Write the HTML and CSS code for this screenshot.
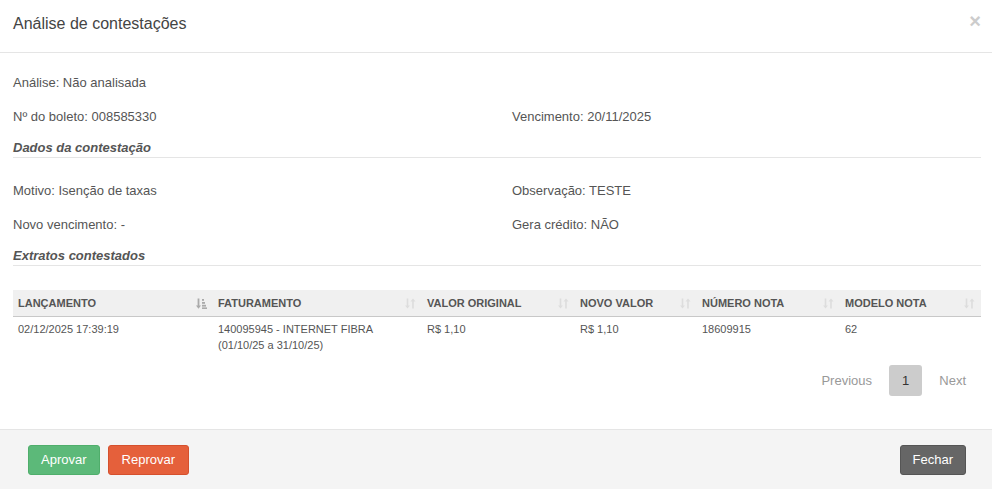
FILE: index.html
```html
<!DOCTYPE html>
<html lang="pt-BR">
<head>
<meta charset="utf-8">
<title>Análise de contestações</title>
<link rel="stylesheet" href="styles.css">
</head>
<body>
<div class="modal">
  <div class="modal-header">
    <h4 class="modal-title">Análise de contestações</h4>
    <span class="close">&times;</span>
  </div>
  <div class="modal-body">
    <div class="fields">
      <div class="row"><div class="col">Análise: Não analisada</div></div>
      <div class="row"><div class="col">Nº do boleto: 008585330</div><div class="col">Vencimento: 20/11/2025</div></div>
    </div>
    <h5 class="section">Dados da contestação</h5>
    <div class="fields">
      <div class="row"><div class="col">Motivo: Isenção de taxas</div><div class="col">Observação: TESTE</div></div>
      <div class="row"><div class="col">Novo vencimento: -</div><div class="col">Gera crédito: NÃO</div></div>
    </div>
    <h5 class="section">Extratos contestados</h5>
    <table class="grid">
      <colgroup>
        <col class="c1"><col class="c2"><col class="c3"><col class="c4"><col class="c5"><col class="c6">
      </colgroup>
      <thead>
        <tr>
          <th><div class="th-in"><span>LANÇAMENTO</span>
            <svg class="sort active" width="11" height="11" viewBox="0 0 11 11"><path d="M2.5 0.5v8.5" stroke="currentColor" stroke-width="1.8"/><path d="M0 7.5l2.5 3.2l2.5-3.2z" fill="currentColor"/><rect x="6" y="1" width="2" height="1.8" fill="currentColor"/><rect x="6" y="4" width="3" height="1.8" fill="currentColor"/><rect x="6" y="6.8" width="4" height="1.8" fill="currentColor"/><rect x="6" y="9.4" width="5" height="1.6" fill="currentColor"/></svg></div></th>
          <th><div class="th-in"><span>FATURAMENTO</span>
            <svg class="sort" width="11" height="11" viewBox="0 0 11 11"><path d="M2.5 0.5v8.5" stroke="currentColor" stroke-width="1.6"/><path d="M0 7.5l2.5 3l2.5-3z" fill="currentColor"/><path d="M8 2v8.5" stroke="currentColor" stroke-width="1.6"/><path d="M5.5 3.5l2.5-3l2.5 3z" fill="currentColor"/></svg></div></th>
          <th><div class="th-in"><span>VALOR ORIGINAL</span>
            <svg class="sort" width="11" height="11" viewBox="0 0 11 11"><path d="M2.5 0.5v8.5" stroke="currentColor" stroke-width="1.6"/><path d="M0 7.5l2.5 3l2.5-3z" fill="currentColor"/><path d="M8 2v8.5" stroke="currentColor" stroke-width="1.6"/><path d="M5.5 3.5l2.5-3l2.5 3z" fill="currentColor"/></svg></div></th>
          <th><div class="th-in"><span>NOVO VALOR</span>
            <svg class="sort" width="11" height="11" viewBox="0 0 11 11"><path d="M2.5 0.5v8.5" stroke="currentColor" stroke-width="1.6"/><path d="M0 7.5l2.5 3l2.5-3z" fill="currentColor"/><path d="M8 2v8.5" stroke="currentColor" stroke-width="1.6"/><path d="M5.5 3.5l2.5-3l2.5 3z" fill="currentColor"/></svg></div></th>
          <th><div class="th-in"><span>NÚMERO NOTA</span>
            <svg class="sort" width="11" height="11" viewBox="0 0 11 11"><path d="M2.5 0.5v8.5" stroke="currentColor" stroke-width="1.6"/><path d="M0 7.5l2.5 3l2.5-3z" fill="currentColor"/><path d="M8 2v8.5" stroke="currentColor" stroke-width="1.6"/><path d="M5.5 3.5l2.5-3l2.5 3z" fill="currentColor"/></svg></div></th>
          <th><div class="th-in"><span>MODELO NOTA</span>
            <svg class="sort" width="11" height="11" viewBox="0 0 11 11"><path d="M2.5 0.5v8.5" stroke="currentColor" stroke-width="1.6"/><path d="M0 7.5l2.5 3l2.5-3z" fill="currentColor"/><path d="M8 2v8.5" stroke="currentColor" stroke-width="1.6"/><path d="M5.5 3.5l2.5-3l2.5 3z" fill="currentColor"/></svg></div></th>
        </tr>
      </thead>
      <tbody>
        <tr>
          <td>02/12/2025 17:39:19</td>
          <td>140095945 - INTERNET FIBRA<br>(01/10/25 a 31/10/25)</td>
          <td>R$ 1,10</td>
          <td>R$ 1,10</td>
          <td>18609915</td>
          <td>62</td>
        </tr>
      </tbody>
    </table>
    <div class="pagination">
      <span class="page disabled">Previous</span>
      <span class="page current">1</span>
      <span class="page disabled">Next</span>
    </div>
  </div>
  <div class="modal-footer">
    <div class="left">
      <button class="btn btn-success">Aprovar</button>
      <button class="btn btn-danger">Reprovar</button>
    </div>
    <button class="btn btn-dark">Fechar</button>
  </div>
</div>
</body>
</html>
```

FILE: styles.css
```css
* { box-sizing: border-box; }
html, body { margin: 0; padding: 0; background: #fff; }
body {
  font-family: "Liberation Sans", Arial, sans-serif;
  font-size: 13px;
  color: #555;
}
.modal { width: 992px; height: 489px; display: flex; flex-direction: column; }
.modal-header {
  display: flex;
  justify-content: space-between;
  align-items: flex-start;
  padding: 14px 11px 18px 13px;
  border-bottom: 1px solid #e5e5e5;
}
.modal-title {
  margin: 0;
  font-size: 16px;
  line-height: 20px;
  font-weight: normal;
  color: #444;
}
.close {
  font-size: 20px;
  line-height: 14px;
  font-weight: bold;
  color: #ccc;
  margin-top: 0;
}
.modal-body {
  flex: 1;
  padding: 21px 11px 0 13px;
}
.fields {
  display: flex;
  flex-direction: column;
  gap: 16px;
  margin-bottom: 13px;
}
.row { display: flex; line-height: 18px; }
.col { flex: none; }
.col:first-child { width: 499px; }
.section {
  margin: 0 0 24px 0;
  font-size: 13px;
  line-height: 18px;
  font-weight: bold;
  font-style: italic;
  color: #555;
  padding-bottom: 0;
  border-bottom: 1px solid #e5e5e5;
}
.section + .grid { margin-top: 2px; }
.grid {
  width: 968px;
  border-collapse: collapse;
  table-layout: fixed;
  font-size: 11px;
  color: #555;
}
.c1 { width: 200px; } .c2 { width: 209px; } .c3 { width: 153px; }
.c4 { width: 122px; } .c5 { width: 143px; } .c6 { width: 141px; }
.grid th {
  background: #f0f0f0;
  padding: 5px 5px;
  line-height: 16px;
  text-align: left;
  font-weight: bold;
  border-bottom: 1px solid #c8c8c8;
}
.th-in { display: flex; justify-content: space-between; align-items: center; }
.sort { color: #ddd; margin-right: 1px; }
.sort.active { color: #aaa; }
.grid td {
  padding: 4px 5px 3px 5px;
  line-height: 16px;
  vertical-align: top;
}
.pagination {
  display: flex;
  justify-content: flex-end;
  gap: 4px;
  margin-top: 9px;
  width: 966px;
}
.page {
  padding: 6px 13px;
  line-height: 19px;
  font-size: 13px;
  border-radius: 3px;
}
.page.disabled { color: #999; }
.page.current { background: #ccc; color: #333; }
.modal-footer {
  display: flex;
  justify-content: space-between;
  align-items: flex-start;
  background: #f4f4f4;
  border-top: 1px solid #e5e5e5;
  padding: 15px 26px 0 28px;
  height: 60px;
}
.left { display: flex; gap: 8px; }
.btn {
  font-family: "Liberation Sans", Arial, sans-serif;
  font-size: 13px;
  line-height: 18px;
  padding: 5px 13px;
  border: 1px solid transparent;
  border-radius: 3px;
  color: #fff;
  margin: 0;
}
.btn-success { background: #5cb979; border-color: #4fae6b; padding: 5px 12px; }
.btn-danger { background: #e5603b; border-color: #d5502d; }
.btn-dark { background: #666; border-color: #555; padding: 5px 12px; }
```
